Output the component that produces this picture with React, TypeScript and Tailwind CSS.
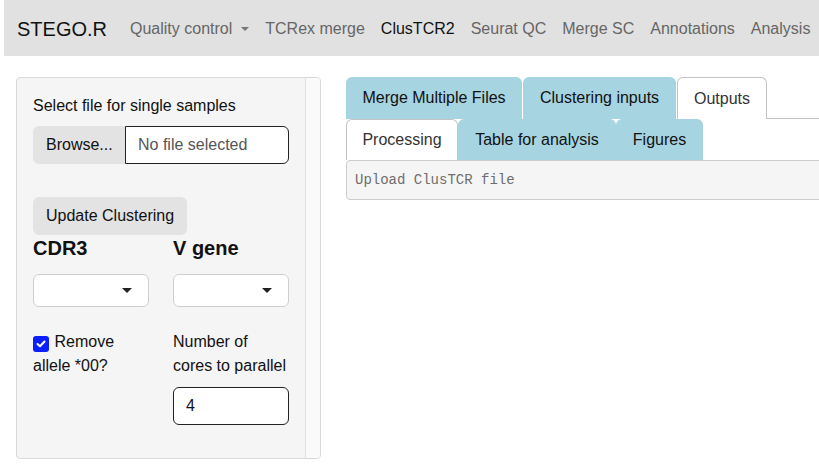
import React from "react";

const navItems = ["TCRex merge", "ClusTCR2", "Seurat QC", "Merge SC", "Annotations", "Analysis"];

const Caret = () => (
  <svg width="10" height="6" viewBox="0 0 10 6" className="fill-[#222]">
    <path d="M0 0 L10 0 L5 5 Z" />
  </svg>
);

const SelectBox = () => (
  <div className="mt-[14px] h-[33px] border border-[#cfcfcf] rounded-md bg-white flex items-center justify-end pr-[16px]">
    <Caret />
  </div>
);

const App: React.FC = () => {
  return (
    <div className="w-[819px] h-[474px] bg-white overflow-hidden text-[16px] text-[#111] font-['Liberation_Sans',Arial,sans-serif]">
      {/* navbar */}
      <nav className="ml-1 h-14 bg-[#e1e1e1] flex items-center pt-[2px] pl-[13px] whitespace-nowrap">
        <span className="text-[20px] text-[#111] mr-[15px]">STEGO.R</span>
        <span className="px-2 text-[#666] flex items-center gap-[9px]">
          Quality control
          <svg width="8" height="5" viewBox="0 0 8 5" className="fill-[#777]">
            <path d="M0 0 L8 0 L4 4 Z" />
          </svg>
        </span>
        {navItems.map((n) => (
          <span key={n} className={"px-2 " + (n === "ClusTCR2" ? "text-[#111]" : "text-[#666]")}>
            {n}
          </span>
        ))}
      </nav>

      <div className="flex pt-[21px] pl-4">
        {/* sidebar */}
        <div className="w-[305px] h-[382px] shrink-0 bg-[#f5f5f5] border border-[#d9d9d9] rounded flex overflow-hidden">
          <div className="flex-1 px-4 pt-[16px]">
            <div className="leading-6">Select file for single samples</div>
            <div className="mt-[8px] h-[38px] flex">
              <div className="w-[92px] bg-[#e3e3e3] rounded-l-md flex items-center pl-[13px]">Browse...</div>
              <div className="flex-1 bg-white border border-[#222] rounded-r-md flex items-center pl-3 text-[#555]">
                No file selected
              </div>
            </div>
            <div className="mt-[33px] h-[38px] w-fit whitespace-nowrap bg-[#e3e3e3] rounded-md flex items-center px-[13px]">
              Update Clustering
            </div>
            <div className="grid grid-cols-2 gap-x-6">
              <div>
                <div className="mt-px text-[20px] leading-6 font-bold">CDR3</div>
                <SelectBox />
                <div className="mt-[23px] leading-6">
                  <span className="inline-flex align-[-1px] w-4 h-4 rounded-[3px] bg-[#0a1eff] items-center justify-center mr-[1px]">
                    <svg width="10" height="8" viewBox="0 0 10 8" fill="none" stroke="white" strokeWidth="2" strokeLinecap="round" strokeLinejoin="round">
                      <path d="M1.5 4 L4 6.3 L8.5 1.5" />
                    </svg>
                  </span>{" "}
                  Remove allele *00?
                </div>
              </div>
              <div>
                <div className="mt-px text-[20px] leading-6 font-bold">V gene</div>
                <SelectBox />
                <div className="mt-[23px] leading-6">Number of cores to parallel</div>
                <div className="mt-[9px] h-[38px] bg-white border border-[#222] rounded-md flex items-center pl-3">4</div>
              </div>
            </div>
          </div>
          <div className="w-[15px] bg-[#fafafa] border-l border-[#e3e3e3]" />
        </div>

        {/* main */}
        <div className="ml-[25px] w-[500px] shrink-0">
          <div className="flex h-[42px] whitespace-nowrap">
            <div className="w-[176px] bg-[#a6d4e1] rounded-t-md flex items-center justify-center mr-px">Merge Multiple Files</div>
            <div className="w-[153px] bg-[#a6d4e1] rounded-t-md flex items-center justify-center mr-px">Clustering inputs</div>
            <div className="w-[90px] bg-white border border-[#c4c4c4] border-b-0 rounded-t-md flex items-center justify-center text-[#333]">
              Outputs
            </div>
            <div className="flex-1 border-b border-[#c4c4c4]" />
          </div>
          <div className="flex h-[41px] whitespace-nowrap">
            <div className="w-[112px] bg-white border border-[#c4c4c4] border-b-0 rounded-t-md flex items-center justify-center text-[#333]">
              Processing
            </div>
            <div className="w-[158px] bg-[#a6d4e1] rounded-t-md flex items-center justify-center">Table for analysis</div>
            <div className="w-[87px] bg-[#a6d4e1] rounded-t-md flex items-center justify-center">Figures</div>
          </div>
          <div className="h-[40px] bg-[#f5f5f5] border border-[#cccccc] rounded flex items-center pl-[8px] text-[14px] text-[#6e6e6e] font-['Liberation_Mono','Courier_New',monospace]">
            Upload ClusTCR file
          </div>
        </div>
      </div>
    </div>
  );
};

export default App;
